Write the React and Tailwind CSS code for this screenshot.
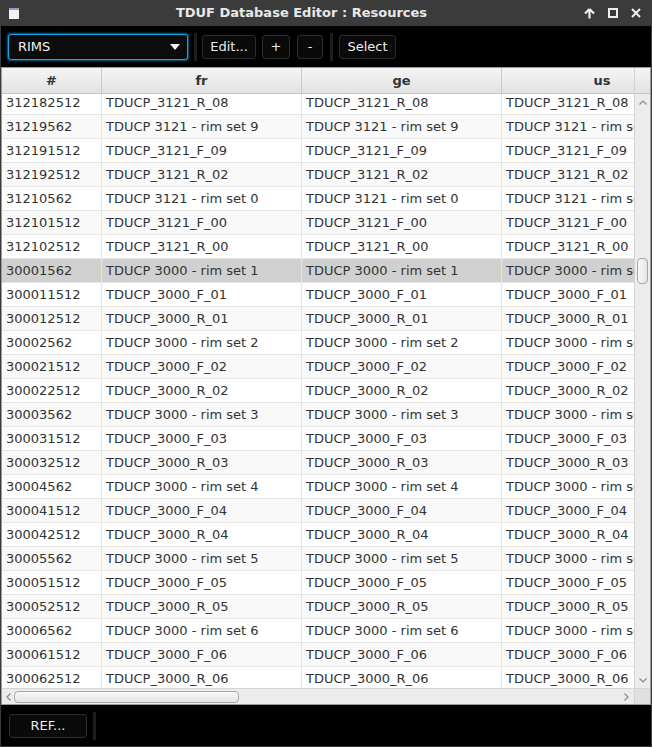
import React from "react";

const rows = [
  ["312182512", "TDUCP_3121_R_08"],
  ["31219562", "TDUCP 3121 - rim set 9"],
  ["312191512", "TDUCP_3121_F_09"],
  ["312192512", "TDUCP_3121_R_02"],
  ["31210562", "TDUCP 3121 - rim set 0"],
  ["312101512", "TDUCP_3121_F_00"],
  ["312102512", "TDUCP_3121_R_00"],
  ["30001562", "TDUCP 3000 - rim set 1"],
  ["300011512", "TDUCP_3000_F_01"],
  ["300012512", "TDUCP_3000_R_01"],
  ["30002562", "TDUCP 3000 - rim set 2"],
  ["300021512", "TDUCP_3000_F_02"],
  ["300022512", "TDUCP_3000_R_02"],
  ["30003562", "TDUCP 3000 - rim set 3"],
  ["300031512", "TDUCP_3000_F_03"],
  ["300032512", "TDUCP_3000_R_03"],
  ["30004562", "TDUCP 3000 - rim set 4"],
  ["300041512", "TDUCP_3000_F_04"],
  ["300042512", "TDUCP_3000_R_04"],
  ["30005562", "TDUCP 3000 - rim set 5"],
  ["300051512", "TDUCP_3000_F_05"],
  ["300052512", "TDUCP_3000_R_05"],
  ["30006562", "TDUCP 3000 - rim set 6"],
  ["300061512", "TDUCP_3000_F_06"],
  ["300062512", "TDUCP_3000_R_06"],
];

const SELECTED = 7;

const ToolButton = ({ label, className = "" }) => (
  <button
    className={`h-[24px] flex items-center justify-center rounded-[3px] border border-[#2c2c2c] bg-[#0a0a0a] text-[13px] text-[#ececec] ${className}`}
  >
    {label}
  </button>
);

const Separator = ({ className = "" }) => (
  <div className={`w-[3px] h-[28px] bg-[#1e1e1e] ${className}`} />
);

const App = () => {
  return (
    <div className="w-[652px] h-[747px] flex flex-col bg-[#3b3b3b] font-['DejaVu_Sans',sans-serif] overflow-hidden">
      {/* title bar */}
      <div className="h-[26px] flex items-center relative px-[9px]">
        <div className="w-[10px] h-[11px] bg-[#f2f2f2] border-t-[2px] border-[#8aa0c0]" />
        <div className="flex-1 text-center text-[13px] font-bold text-[#e8e8e8]">
          TDUF Database Editor : Resources
        </div>
        <div className="flex items-center gap-[13px] pr-[2px]">
          <svg width="11" height="11" viewBox="0 0 11 11">
            <path d="M5.5 1 L1 5.5 M5.5 1 L10 5.5 M5.5 1 V10.5" stroke="#eeeeee" strokeWidth="2.2" fill="none" />
          </svg>
          <svg width="10" height="10" viewBox="0 0 10 10">
            <rect x="1" y="1" width="8" height="8" stroke="#eeeeee" strokeWidth="2" fill="none" />
          </svg>
          <svg width="10" height="10" viewBox="0 0 10 10">
            <path d="M1 1 L9 9 M9 1 L1 9" stroke="#eeeeee" strokeWidth="2" fill="none" />
          </svg>
        </div>
      </div>

      {/* toolbar */}
      <div className="h-[41px] mx-[1px] bg-black flex items-center px-[7px]">
        <div className="w-[180px] h-[26px] rounded-[3px] border border-[#16a6e6] shadow-[0_0_2px_1px_rgba(10,140,210,0.7)] bg-[#0c0c0c] flex items-center justify-between pl-[9px] pr-[7px]">
          <span className="text-[13px] text-[#f2f2f2]">RIMS</span>
          <svg width="10" height="6" viewBox="0 0 10 6">
            <path d="M0 0 H10 L5 6 Z" fill="#f0f0f0" />
          </svg>
        </div>
        <Separator className="ml-[6px]" />
        <ToolButton label="Edit..." className="ml-[5px] w-[54px]" />
        <ToolButton label="+" className="ml-[6px] w-[28px]" />
        <ToolButton label="-" className="ml-[7px] w-[26px]" />
        <Separator className="ml-[7px]" />
        <ToolButton label="Select" className="ml-[6px] w-[57px]" />
      </div>

      {/* table */}
      <div className="flex-1 mx-[1px] border border-[#9a9a9a] bg-white flex flex-col overflow-hidden">
        <div className="flex flex-1 min-h-0">
          <div className="flex-1 flex flex-col min-w-0 overflow-hidden">
            {/* header */}
            <div className="h-[26px] flex shrink-0 bg-gradient-to-b from-[#f5f5f5] to-[#e2e2e2] border-b border-[#c4c4c4] text-[13px] font-bold text-[#333]">
              <div className="w-[100px] shrink-0 flex items-center justify-center border-r border-[#c8c8c8]">#</div>
              <div className="w-[200px] shrink-0 flex items-center justify-center border-r border-[#c8c8c8]">fr</div>
              <div className="w-[200px] shrink-0 flex items-center justify-center border-r border-[#c8c8c8]">ge</div>
              <div className="w-[200px] shrink-0 flex items-center justify-center">us</div>
            </div>
            {/* body */}
            <div className="flex-1 overflow-hidden">
              <div className="-mt-[3px]">
                {rows.map((row, i) => (
                  <div
                    key={row[0]}
                    className={`h-[24px] flex text-[13px] text-[#333] whitespace-nowrap ${
                      i === SELECTED ? "bg-[#d0d0d0]" : i % 2 === 1 ? "bg-[#f9f9f9]" : "bg-white"
                    }`}
                  >
                    <div className="w-[100px] shrink-0 flex items-center pl-[4px] border-r border-b border-[#e6e6e6] overflow-hidden">{row[0]}</div>
                    <div className="w-[200px] shrink-0 flex items-center pl-[4px] border-r border-b border-[#e6e6e6] overflow-hidden">{row[1]}</div>
                    <div className="w-[200px] shrink-0 flex items-center pl-[4px] border-r border-b border-[#e6e6e6] overflow-hidden">{row[1]}</div>
                    <div className="w-[200px] shrink-0 flex items-center pl-[4px] border-b border-[#e6e6e6] overflow-hidden">{row[1]}</div>
                  </div>
                ))}
              </div>
            </div>
          </div>
          {/* vertical scrollbar */}
          <div className="w-[16px] shrink-0 flex flex-col bg-[#ececec] border-l border-[#d4d4d4]">
            <div className="h-[26px] bg-gradient-to-b from-[#f5f5f5] to-[#e2e2e2] border-b border-[#c4c4c4]" />
            <div className="h-[16px] flex items-center justify-center">
              <svg width="8" height="5" viewBox="0 0 8 5">
                <path d="M0.5 4.5 L4 1 L7.5 4.5" stroke="#8a8a8a" strokeWidth="1.2" fill="none" />
              </svg>
            </div>
            <div className="flex-1 flex flex-col">
              <div className="h-[148px]" />
              <div className="h-[26px] mx-[2px] rounded-[4px] border border-[#a8a8a8] bg-gradient-to-r from-[#f8f8f8] to-[#e4e4e4]" />
            </div>
            <div className="h-[16px] flex items-center justify-center">
              <svg width="8" height="5" viewBox="0 0 8 5">
                <path d="M0.5 0.5 L4 4 L7.5 0.5" stroke="#8a8a8a" strokeWidth="1.2" fill="none" />
              </svg>
            </div>
          </div>
        </div>
        {/* horizontal scrollbar */}
        <div className="h-[16px] shrink-0 flex bg-[#ececec] border-t border-[#d4d4d4]">
          <div className="flex-1 flex items-center">
            <div className="w-[12px] flex items-center justify-center">
              <svg width="5" height="8" viewBox="0 0 5 8">
                <path d="M4.5 0.5 L1 4 L4.5 7.5" stroke="#8a8a8a" strokeWidth="1.2" fill="none" />
              </svg>
            </div>
            <div className="w-[225px] h-[12px] rounded-[4px] border border-[#a8a8a8] bg-gradient-to-b from-[#f8f8f8] to-[#e4e4e4]" />
            <div className="flex-1" />
            <div className="w-[16px] flex items-center justify-center">
              <svg width="5" height="8" viewBox="0 0 5 8">
                <path d="M0.5 0.5 L4 4 L0.5 7.5" stroke="#8a8a8a" strokeWidth="1.2" fill="none" />
              </svg>
            </div>
          </div>
          <div className="w-[16px] bg-[#e0e0e0] border-l border-[#d4d4d4]" />
        </div>
      </div>

      {/* bottom bar */}
      <div className="h-[41px] mx-[1px] mb-[1px] bg-black flex items-center px-[8px]">
        <ToolButton label="REF..." className="w-[78px]" />
        <Separator className="ml-[6px]" />
      </div>
    </div>
  );
};

export default App;
